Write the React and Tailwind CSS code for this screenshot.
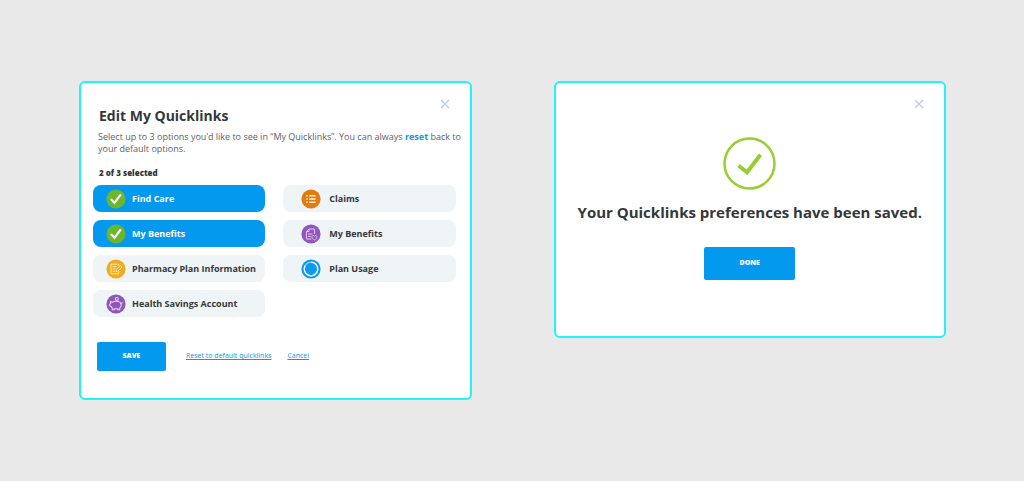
import React, { useState } from 'react';

const CheckIcon = () => (
  <svg viewBox="0 0 20 20" className="w-5 h-5 shrink-0" aria-hidden="true">
    <circle cx="10" cy="10" r="9.6" fill="#6cb52d" />
    <path d="M5.4 10.6l3 3.2 6-7.8" fill="none" stroke="#fff" strokeWidth="2.1" strokeLinecap="round" />
  </svg>
);

const PharmacyIcon = () => (
  <svg viewBox="0 0 20 20" className="w-5 h-5 shrink-0" aria-hidden="true">
    <circle cx="10" cy="10" r="9.6" fill="#f0ac1b" />
    <g fill="none" stroke="#fbe3ae" strokeWidth="1" strokeLinejoin="round" strokeLinecap="round">
      <path d="M12.8 12.4v2.4H5V5.2h7.8v1.2" />
      <path d="M10 12.4l.4-2 4-4 1.6 1.6-4 4z" />
      <path d="M7 7.6h3.4M7 9.8h2.4M7 12.2h1.6" />
    </g>
  </svg>
);

const SavingsIcon = () => (
  <svg viewBox="0 0 20 20" className="w-5 h-5 shrink-0" aria-hidden="true">
    <circle cx="10" cy="10" r="9.6" fill="#8f56b8" />
    <g fill="none" stroke="#e6d3f2" strokeWidth="1.1" strokeLinejoin="round" strokeLinecap="round">
      <path d="M4.4 7.4l2 .8c1-.7 2.2-1 3.8-1 3 0 5 1.6 5 4 0 1.3-.6 2.2-1.5 2.9v1.7h-2v-1H8.2v1h-2v-2l-1.4-1.4-1-.4v-2l1-.6z" />
      <path d="M15 9.6l1.2-.8" />
      <circle cx="10.8" cy="5" r="1.5" />
    </g>
  </svg>
);

const ClaimsIcon = () => (
  <svg viewBox="0 0 20 20" className="w-5 h-5 shrink-0" aria-hidden="true">
    <circle cx="10" cy="10" r="9.6" fill="#e17d0e" />
    <path d="M5.2 6.8h1.6M5.2 10h1.6M5.2 13.2h1.6M8.2 6.8h6.4M8.2 10h6.4M8.2 13.2h6.4" stroke="#fdeedb" strokeWidth="1.5" />
  </svg>
);

const BenefitsIcon = () => (
  <svg viewBox="0 0 20 20" className="w-5 h-5 shrink-0" aria-hidden="true">
    <circle cx="10" cy="10" r="9.6" fill="#9355bd" />
    <g fill="none" stroke="#dfc8ee" strokeWidth="1" strokeLinejoin="round">
      <path d="M10.4 15H5.4V7.6L8 5h5.6v5" />
      <path d="M8 5v2.6H5.4M7 10h4.4M7 12.4h3" />
      <path d="M13.4 16c-3.6-2-2.6-4.6-1-4.4.6.1 1 .6 1 .6s.4-.5 1-.6c1.6-.2 2.6 2.4-1 4.4z" />
    </g>
  </svg>
);

const UsageIcon = () => (
  <svg viewBox="0 0 20 20" className="w-5 h-5 shrink-0" aria-hidden="true">
    <circle cx="10" cy="10" r="9.6" fill="#0a9bef" />
    <circle cx="10" cy="10" r="6.8" fill="none" stroke="#8fd0f8" strokeWidth="1.3" />
    <path d="M10 3.2A6.8 6.8 0 1 1 4.1 6.6" fill="none" stroke="#fff" strokeWidth="1.3" />
  </svg>
);

const CloseButton = () => (
  <button type="button" aria-label="Close" className="w-[10px] h-[10px] shrink-0 cursor-pointer">
    <svg viewBox="0 0 10 10" className="w-full h-full">
      <path d="M1 1l8 8M9 1L1 9" stroke="#c5d1d8" strokeWidth="1.5" />
    </svg>
  </button>
);

const columns = [
  [
    { id: 'find-care', label: 'Find Care', icon: PharmacyIcon },
    { id: 'my-benefits', label: 'My Benefits', icon: BenefitsIcon },
    { id: 'pharmacy', label: 'Pharmacy Plan Information', icon: PharmacyIcon },
    { id: 'hsa', label: 'Health Savings Account', icon: SavingsIcon },
  ],
  [
    { id: 'claims', label: 'Claims', icon: ClaimsIcon },
    { id: 'benefits', label: 'My Benefits', icon: BenefitsIcon },
    { id: 'usage', label: 'Plan Usage', icon: UsageIcon },
  ],
];

const defaults = ['find-care', 'my-benefits'];
const MAX_LINKS = 3;

const Option = ({ option, checked, onToggle, className }) => {
  const Icon = checked ? CheckIcon : option.icon;
  return (
    <label
      htmlFor={option.id}
      className={`relative flex items-center h-[27px] rounded-lg text-[9px] leading-3 font-bold cursor-pointer ${className} ${
        checked ? 'bg-[#0399ee] text-white' : 'bg-[#eff4f7] text-[#33383b]'
      }`}
    >
      <input id={option.id} type="checkbox" checked={checked} onChange={onToggle} className="sr-only" />
      <Icon />
      <span className="whitespace-nowrap">{option.label}</span>
    </label>
  );
};

const EditQuicklinks = () => {
  const [selected, setSelected] = useState(defaults);

  const toggle = (id) => {
    if (selected.includes(id)) {
      setSelected(selected.filter((item) => item !== id));
    } else if (selected.length < MAX_LINKS) {
      setSelected([...selected, id]);
    }
  };

  const reset = (e) => {
    e.preventDefault();
    setSelected(defaults);
  };

  return (
    <section className="bg-white border-2 border-[#1ff4fb] rounded-md pt-4 pb-[27px] pl-3 pr-[14px]">
      <div className="flex justify-between items-start px-[6px]">
        <h2 className="mt-[7px] text-[14px] leading-5 font-bold text-[#33383b]">Edit My Quicklinks</h2>
        <CloseButton />
      </div>
      <p className="mt-[5px] pl-[5px] whitespace-nowrap text-[9px] leading-3 text-[#5c6266]">
        Select up to 3 options you’d like to see in “My Quicklinks”. You can always{' '}
        <a href="#reset" onClick={reset} className="font-bold text-[#0399ee]">reset</a> back to
        <br />
        your default options.
      </p>
      <p className="mt-3 pl-[6px] text-[8px] leading-3 font-extrabold text-[#33383b]">{selected.length} of 3 selected</p>
      <div className="mt-[6px] grid grid-cols-2 gap-[18px]">
        <div className="flex flex-col gap-2">
          {columns[0].map((option) => (
            <Option
              key={option.id}
              option={option}
              checked={selected.includes(option.id)}
              onToggle={() => toggle(option.id)}
              className="pl-[13px] gap-[6px]"
            />
          ))}
        </div>
        <div className="flex flex-col gap-2">
          {columns[1].map((option) => (
            <Option
              key={option.id}
              option={option}
              checked={selected.includes(option.id)}
              onToggle={() => toggle(option.id)}
              className="pl-[18px] gap-2"
            />
          ))}
        </div>
      </div>
      <div className="mt-[25px] pl-1 flex items-center text-[7px] text-[#0399ee]">
        <button type="button" className="w-[69px] h-[29px] rounded-xs bg-[#0399ee] font-extrabold text-white cursor-pointer">
          SAVE
        </button>
        <a href="#reset" onClick={reset} className="ml-5 underline">Reset to default quicklinks</a>
        <a href="#cancel" className="ml-4 underline">Cancel</a>
      </div>
    </section>
  );
};

const SavedMessage = () => (
  <section className="flex flex-col items-center bg-white border-2 border-[#1ff4fb] rounded-md pt-4 pb-14">
    <div className="self-end pr-5 flex">
      <CloseButton />
    </div>
    <svg viewBox="0 0 53 53" className="mt-7 w-[53px] h-[53px]" aria-hidden="true">
      <circle cx="26.5" cy="26.5" r="25" fill="none" stroke="#9acd32" strokeWidth="2.5" />
      <path d="M15.5 28.5l8.5 6.8L37.5 17.8" fill="none" stroke="#9acd32" strokeWidth="4" />
    </svg>
    <h2 className="mt-3 text-[15px] leading-5 font-bold text-[#33383b]">Your Quicklinks preferences have been saved.</h2>
    <button type="button" className="mt-[25px] w-[91px] h-[33px] rounded-xs bg-[#0399ee] text-[7px] font-extrabold text-white cursor-pointer">
      DONE
    </button>
  </section>
);

const App = () => (
  <main className="min-h-screen grid grid-cols-2 items-start gap-[82px] pl-[79px] pr-[78px] py-[81px] bg-[#e9e9e9] font-['Open_Sans',sans-serif]">
    <EditQuicklinks />
    <SavedMessage />
  </main>
);

export default App;
